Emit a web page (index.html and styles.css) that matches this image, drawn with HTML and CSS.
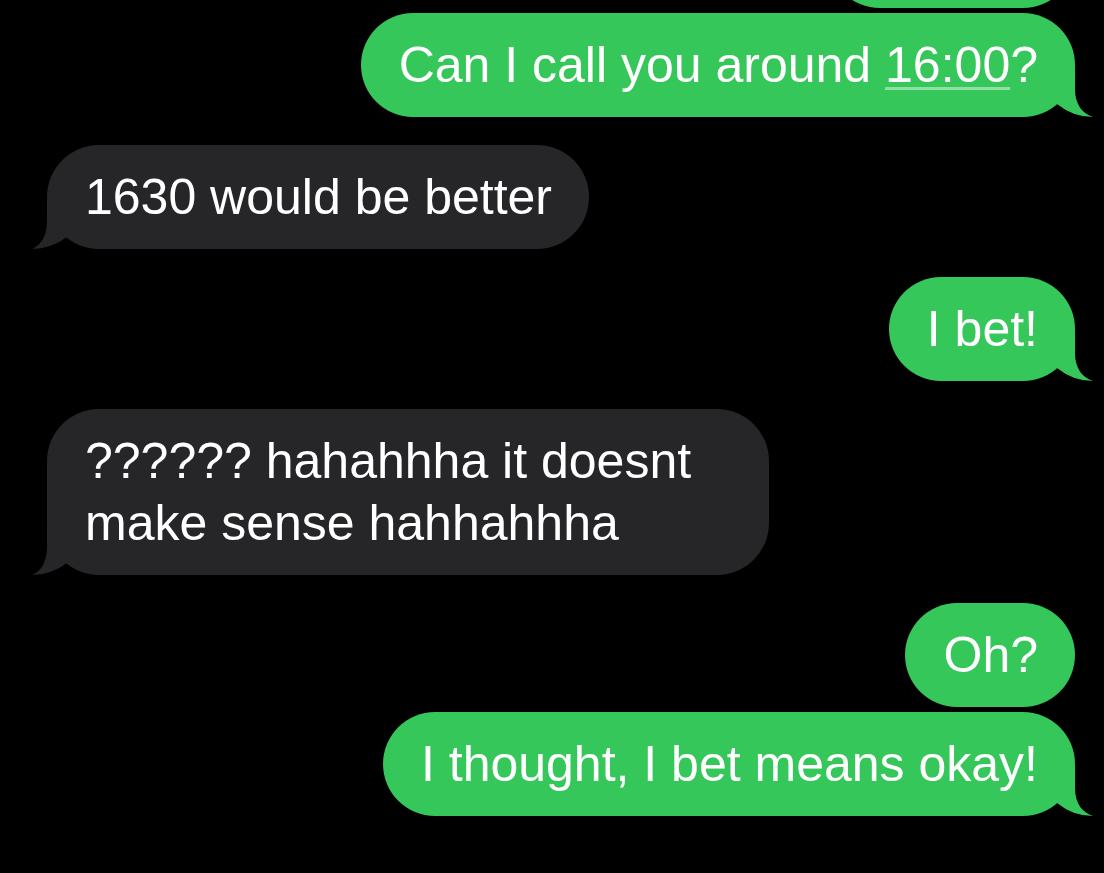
FILE: index.html
```
<!DOCTYPE html>
<html lang="en">
<head>
    <meta charset="UTF-8">
    <meta name="viewport" content="width=device-width, initial-scale=1.0">
    <title>Messages</title>
    <link rel="stylesheet" href="styles.css">
</head>
<body>
    <div class="chat">
        <div class="bubble sent first-cut">Perfect!</div>
        <div class="bubble sent tail same">Can I call you around <span class="link">16:00</span>?</div>
        <div class="bubble received tail">1630 would be better</div>
        <div class="bubble sent tail">I bet!</div>
        <div class="bubble received tail">?????? hahahhha it doesnt make sense hahhahhha</div>
        <div class="bubble sent">Oh?</div>
        <div class="bubble sent tail same">I thought, I bet means okay!</div>
        <div class="timestamp"><b>Today</b> 16:12</div>
    </div>
</body>
</html>
```

FILE: styles.css
```
body {
    margin: 0;
    background: #000;
    font-family: 'Liberation Sans', Arial, sans-serif;
    overflow: hidden;
}
.chat {
    display: flex;
    flex-direction: column;
    padding: 0 29px 0 47px;
}
.bubble {
    position: relative;
    z-index: 0;
    max-width: 722px;
    box-sizing: border-box;
    padding: 21px 37px 21px 38px;
    border-radius: 52px;
    font-size: 50px;
    line-height: 62px;
    color: #fff;
    margin-top: 28px;
}
.bubble.same {
    margin-top: 5px;
}
.bubble.first-cut {
    margin-top: -96px;
}
.sent {
    align-self: flex-end;
    background: #35c759;
}
.received {
    align-self: flex-start;
    background: #262628;
}
.link {
    text-decoration: underline;
    text-decoration-color: rgba(255, 255, 255, 0.45);
    text-decoration-thickness: 3px;
    text-underline-offset: 5px;
}

/* tail in the bottom corner */
.tail::before {
    content: "";
    position: absolute;
    z-index: -1;
    bottom: 0;
    height: 50px;
    background: inherit;
}
.sent.tail::before {
    right: -18px;
    width: 60px;
    clip-path: path("M0 0 H42 V22 C42 38 50 47 60 50 Q40 50 24 37 H0 Z");
}
.received.tail::before {
    left: -15px;
    width: 57px;
    clip-path: path("M57 0 H15 V22 C15 38 8 47 0 50 Q19 50 35 38 H57 Z");
}

.timestamp {
    align-self: center;
    margin-top: 54px;
    color: #8e8e93;
    font-size: 28px;
}
.timestamp b {
    font-weight: 700;
}
```
